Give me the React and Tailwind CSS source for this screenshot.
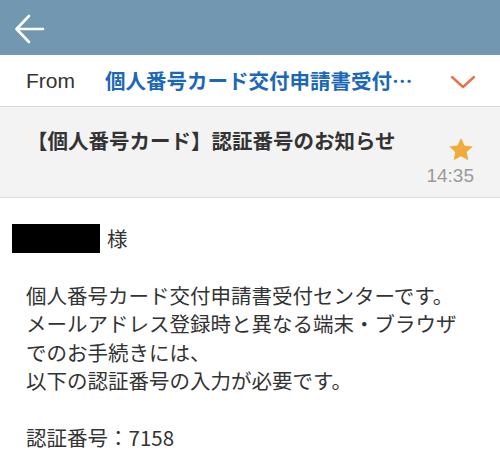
import React from 'react';

// Mail detail view — mobile mail client

const jp = { fontFamily: '"Noto Sans CJK JP", "Noto Sans", sans-serif' };

function BackArrow() {
  return (
    <svg width="34" height="34" viewBox="0 0 34 34" fill="none" stroke="white" strokeWidth="2.6" strokeLinecap="round" strokeLinejoin="round">
      <path d="M30 18H4" />
      <path d="M16 5L3.5 18L16 31" />
    </svg>
  );
}

function Chevron() {
  return (
    <svg width="26" height="16" viewBox="0 0 26 16" fill="none" stroke="#e8724a" strokeWidth="2.4" strokeLinecap="round" strokeLinejoin="round">
      <path d="M2 3L13 13L24 3" />
    </svg>
  );
}

function Star() {
  return (
    <svg width="26" height="25" viewBox="0 0 24 23">
      <path d="M12 0.8l3.3 7 7.6 0.9-5.6 5.2 1.5 7.6L12 17.7 5.2 21.5l1.5-7.6L1.1 8.7l7.6-0.9z" fill="#efac3c" />
    </svg>
  );
}

export default function App() {
  return (
    <div className="w-[500px] h-[475px] bg-white overflow-hidden text-[#333]" style={jp}>
      <div className="h-[55px] bg-[#7297b0] flex items-center pl-[13px]">
        <BackArrow />
      </div>

      <div className="h-[52px] flex items-center border-b border-[#dcdcdc]">
        <span className="w-[105px] pl-[26px] text-[21px] text-[#333] font-['Liberation_Sans',sans-serif]">From</span>
        <span className="whitespace-nowrap text-[20.5px] font-bold text-[#1b67b8]">個人番号カード交付申請書受付…</span>
        <span className="ml-auto mr-[24px] mt-[2px] flex"><Chevron /></span>
      </div>

      <div className="h-[91px] bg-[#f3f3f3] border-b border-[#dedede] flex pl-[27px] pr-[26px]">
        <div className="pt-[18px] text-[20.5px] font-bold text-[#333] leading-[30px]">【個人番号カード】認証番号のお知らせ</div>
        <div className="ml-auto flex flex-col items-end pt-[30px]">
          <Star />
          <span className="mt-[2px] text-[19px] leading-[24px] text-[#9a9a9a] font-['Liberation_Sans',sans-serif]">14:35</span>
        </div>
      </div>

      <div className="pt-[25px] pl-[12px]">
        <div className="flex items-center gap-[7px]">
          <div className="w-[88px] h-[29px] bg-black" />
          <span className="text-[20.5px]">様</span>
        </div>
        <div className="mt-[27px] pl-[14px] text-[20.5px] leading-[28.5px] text-[#333]">
          <p>個人番号カード交付申請書受付センターです。</p>
          <p>メールアドレス登録時と異なる端末・ブラウザ</p>
          <p>でのお手続きには、</p>
          <p>以下の認証番号の入力が必要です。</p>
          <p className="mt-[28.5px]">認証番号：7158</p>
        </div>
      </div>
    </div>
  );
}
